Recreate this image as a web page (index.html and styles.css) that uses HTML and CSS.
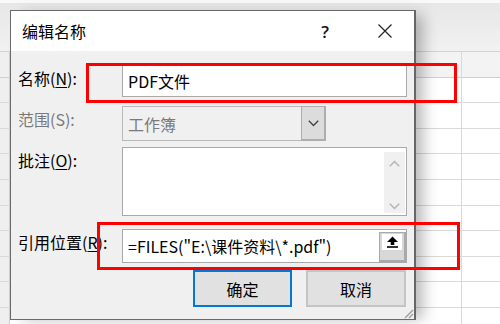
FILE: index.html
```html
<!DOCTYPE html>
<html lang="zh-CN">
<head>
<meta charset="utf-8">
<title>编辑名称</title>
<link rel="stylesheet" href="styles.css">
</head>
<body>
<div class="sheet">
  <div class="ribbon"></div>
  <div class="row head"><div class="c rh"></div><div class="c a"></div><div class="c b"></div></div>
  <div class="row"><div class="c rh"></div><div class="c a"></div><div class="c b"></div></div>
  <div class="row"><div class="c rh"></div><div class="c a"></div><div class="c b"></div></div>
  <div class="row"><div class="c rh"></div><div class="c a"></div><div class="c b"></div></div>
  <div class="row"><div class="c rh"></div><div class="c a"></div><div class="c b"></div></div>
  <div class="row"><div class="c rh"></div><div class="c a"></div><div class="c b"></div></div>
  <div class="row"><div class="c rh"></div><div class="c a"></div><div class="c b"></div></div>
  <div class="row"><div class="c rh"></div><div class="c a"></div><div class="c b"></div></div>
  <div class="row"><div class="c rh"></div><div class="c a"></div><div class="c b"></div></div>
  <div class="row"><div class="c rh"></div><div class="c a"></div><div class="c b"></div></div>
  <div class="row"><div class="c rh"></div><div class="c a"></div><div class="c b"></div></div>
</div>

<div class="dialog">
  <div class="titlebar">
    <span class="title">编辑名称</span>
    <span class="tb-btn help">?</span>
    <span class="tb-btn close">
      <svg width="14" height="14" viewBox="0 0 14 14"><path d="M0.5 0.5L13.5 13.5M13.5 0.5L0.5 13.5" stroke="#222" stroke-width="1.2" fill="none"/></svg>
    </span>
  </div>
  <div class="body">
    <div class="form">
      <div class="lbl">名称(<u>N</u>):</div>
      <div class="field input name"><span class="val">PDF文件</span></div>

      <div class="lbl disabled">范围(S):</div>
      <div class="field combo">
        <span class="val">工作簿</span>
        <span class="drop"><svg width="11" height="7" viewBox="0 0 11 7"><path d="M0.8 0.8L5.5 5.5L10.2 0.8" stroke="#444" stroke-width="1.4" fill="none"/></svg></span>
      </div>

      <div class="lbl">批注(<u>O</u>):</div>
      <div class="field textarea">
        <div class="scroll">
          <svg width="11" height="7" viewBox="0 0 11 7"><path d="M0.8 6.2L5.5 1.5L10.2 6.2" stroke="#b4b4b4" stroke-width="1.5" fill="none"/></svg>
          <svg width="11" height="7" viewBox="0 0 11 7"><path d="M0.8 0.8L5.5 5.5L10.2 0.8" stroke="#b4b4b4" stroke-width="1.5" fill="none"/></svg>
        </div>
      </div>

      <div class="lbl">引用位置(<u>R</u>):</div>
      <div class="field input ref">
        <span class="val">=FILES("E:\课件资料\*.pdf")</span>
        <span class="collapse">
          <span class="collapse-face">
            <svg width="13" height="12" viewBox="0 0 13 12"><path d="M6.5 0.5L12 6H8.3V9H4.7V6H1Z" fill="#000"/><rect x="1" y="10.2" width="11" height="1.6" fill="#000"/></svg>
          </span>
        </span>
      </div>
    </div>
    <div class="buttons">
      <button class="btn primary">确定</button>
      <button class="btn">取消</button>
    </div>
  </div>
  <svg class="grip" width="11" height="11" viewBox="0 0 11 11"><path d="M10 2L2 10M10 6L6 10" stroke="#9a9a9a" stroke-width="1.3" fill="none"/></svg>
</div>

<div class="mark m1"></div>
<div class="mark m2"></div>
</body>
</html>
```

FILE: styles.css
```css
html, body {
  margin: 0;
  padding: 0;
}
body {
  width: 500px;
  height: 324px;
  overflow: hidden;
  position: relative;
  background: #ffffff;
  font-family: "Noto Sans CJK SC", "Noto Sans", sans-serif;
  color: #000;
}

/* spreadsheet background */
.sheet {
  display: flex;
  flex-direction: column;
}
.ribbon {
  height: 52px;
  box-sizing: border-box;
  border-top: 3px solid #f9f9f9;
  background: linear-gradient(#e7e7e7, #eeeeee 70%, #f1f1f1);
  border-bottom: 1px solid #d2d2d2;
}
.row {
  display: flex;
  height: 25.6px;
  box-sizing: border-box;
  border-bottom: 1px solid #d9d9d9;
  flex-shrink: 0;
}
.row.head {
  background: #f3f3f3;
  border-bottom-color: #cfcfcf;
}
.c {
  height: 100%;
  box-sizing: border-box;
}
.rh {
  width: 10px;
  background: #efefef;
  border-right: 1px solid #d0d0d0;
}
.a {
  width: 452px;
  border-right: 1px solid #d9d9d9;
}
.b {
  flex: 1;
}

/* dialog */
.dialog {
  position: absolute;
  left: 10px;
  top: 10px;
  width: 406px;
  height: 310px;
  box-sizing: border-box;
  border: 1px solid #6a6a6a;
  border-right: 2px solid #666;
  background: #f0f0f0;
  box-shadow: 10px 2px 14px -3px rgba(0, 0, 0, 0.28);
  display: flex;
  flex-direction: column;
}
.titlebar {
  height: 40px;
  background: #ffffff;
  display: flex;
  align-items: center;
  padding-left: 11px;
  flex-shrink: 0;
}
.title {
  font-size: 16px;
  flex: 1;
}
.tb-btn {
  width: 46px;
  height: 40px;
  display: flex;
  align-items: center;
  justify-content: center;
}
.help {
  font-family: "Open Sans", sans-serif;
  font-size: 17px;
  font-weight: 600;
  color: #111;
  margin-right: 14px;
}
.close {
  margin-right: 6px;
}

.body {
  flex: 1;
  padding: 14px 8px 0 0;
  display: flex;
  flex-direction: column;
}
.form {
  display: grid;
  grid-template-columns: 111px 285px;
}
.lbl {
  font-size: 16px;
  line-height: 20px;
  padding-left: 7px;
  padding-top: 3px;
  align-self: start;
  white-space: nowrap;
}
.lbl u {
  text-underline-offset: 2px;
}
.lbl.disabled {
  color: #7a7a7a;
}
.field {
  box-sizing: border-box;
  border: 1px solid #a9a9a9;
  background: #fff;
  display: flex;
  align-items: center;
}
.val {
  font-size: 16px;
  padding-left: 5px;
  white-space: nowrap;
}
.name {
  height: 32px;
  margin-bottom: 9px;
}
.combo {
  width: 204px;
  height: 35px;
  margin-bottom: 6px;
  background: #f0f0f0;
  border-color: #b9b9b9;
}
.combo .val {
  color: #7a7a7a;
  flex: 1;
}
.drop {
  width: 22px;
  align-self: stretch;
  margin: -1px -1px -1px 0;
  border: 1px solid #adadad;
  border-width: 1px 2px 2px 1px;
  background: #dcdcdc;
  display: flex;
  align-items: center;
  justify-content: center;
}
.textarea {
  height: 69px;
  margin-bottom: 13px;
  align-items: stretch;
  justify-content: flex-end;
  padding: 4px 1px 2px 0;
}
.scroll {
  width: 21px;
  background: #f0f0f0;
  display: flex;
  flex-direction: column;
  align-items: center;
  justify-content: space-between;
  padding: 8px 0 3px;
}
.ref {
  height: 34px;
}
.ref .val {
  flex: 1;
}
.collapse {
  width: 27px;
  align-self: stretch;
  margin: 2px 0 0 0;
  box-sizing: border-box;
  border: 1px solid #a9a9a9;
  border-width: 1px 2px 2px 1px;
  background: #d8d8d8;
  display: flex;
  justify-content: center;
  align-items: flex-start;
  padding-top: 1px;
}
.collapse-face {
  width: 20px;
  height: 16px;
  background: #fff;
  display: flex;
  align-items: center;
  justify-content: center;
}

.buttons {
  display: flex;
  justify-content: flex-end;
  gap: 14px;
  margin-top: 7px;
}
.btn {
  width: 100px;
  height: 37px;
  box-sizing: border-box;
  border: 2px solid #c4c4c4;
  background: #e1e1e1;
  font-family: "Noto Sans CJK SC", sans-serif;
  font-size: 16px;
  color: #000;
  padding: 0;
}
.btn.primary {
  width: 99px;
  border-color: #0078d7;
}

.grip {
  position: absolute;
  right: 0;
  bottom: 0;
}

/* red annotation boxes */
.mark {
  position: absolute;
  border: 3px solid #ff0000;
  box-sizing: border-box;
}
.m1 {
  left: 86px;
  top: 63px;
  width: 371px;
  height: 40px;
}
.m2 {
  left: 97px;
  top: 222px;
  width: 363px;
  height: 48px;
}
```
